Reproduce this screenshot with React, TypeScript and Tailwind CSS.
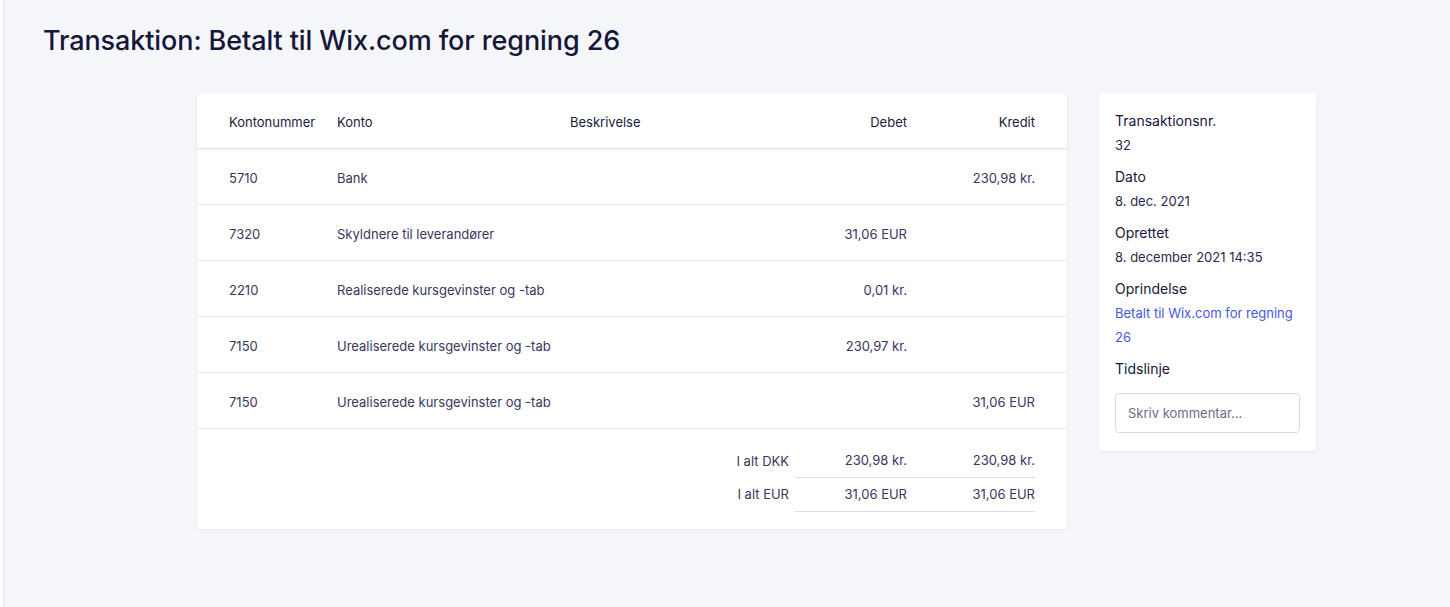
import React from 'react';

const rows = [
  { nr: '5710', konto: 'Bank', debet: '', kredit: '230,98 kr.' },
  { nr: '7320', konto: 'Skyldnere til leverandører', debet: '31,06 EUR', kredit: '' },
  { nr: '2210', konto: 'Realiserede kursgevinster og -tab', debet: '0,01 kr.', kredit: '' },
  { nr: '7150', konto: 'Urealiserede kursgevinster og -tab', debet: '230,97 kr.', kredit: '' },
  { nr: '7150', konto: 'Urealiserede kursgevinster og -tab', debet: '', kredit: '31,06 EUR' },
];

const cols = 'grid grid-cols-[108px_233px_225px_112px_128px] px-8';

export default function App() {
  return (
    <div className="flex min-h-[607px] bg-[#f5f6fa] font-['Inter',sans-serif]">
      <div className="w-[3px] shrink-0 bg-white" />
      <div className="w-px shrink-0 bg-[#e4e5ee]" />
      <div className="flex-1 pt-[25px]">
        <h1 className="pl-[39px] text-[27px] font-medium leading-8 tracking-[-0.1px] text-[#16163a]">
          Transaktion: Betalt til Wix.com for regning 26
        </h1>

        <div className="mt-[36px] flex items-start gap-8 pl-[193px]">
          {/* Posteringer */}
          <div className="w-[870px] rounded bg-white shadow-[0_1px_3px_rgba(30,30,80,0.06)]">
            <div className={`${cols} h-[56px] items-center border-b border-[#dcdde8] pt-1 text-[13px] text-[#1c1b3d] shadow-[0_1px_2px_rgba(30,30,80,0.06)]`}>
              <div>Kontonummer</div>
              <div>Konto</div>
              <div>Beskrivelse</div>
              <div className="text-right">Debet</div>
              <div className="text-right">Kredit</div>
            </div>
            {rows.map((r, i) => (
              <div
                key={i}
                className={`${cols} h-14 items-center border-b border-[#ececf3] pt-1 text-[13px] text-[#3a3660]`}
              >
                <div>{r.nr}</div>
                <div>{r.konto}</div>
                <div />
                <div className="text-right">{r.debet}</div>
                <div className="text-right">{r.kredit}</div>
              </div>
            ))}
            <div className="px-8 pt-4 pb-[17px] text-[13px] text-[#3a3660]">
              <div className="grid grid-cols-[108px_233px_225px_112px_128px]">
                <div className="col-span-3 flex h-[33px] items-center justify-end pr-[6px]">I alt DKK</div>
                <div className="col-span-2 grid h-[33px] grid-cols-[112px_128px] items-center border-b border-[#dcdde6]">
                  <div className="text-right">230,98 kr.</div>
                  <div className="text-right">230,98 kr.</div>
                </div>
                <div className="col-span-3 flex h-[34px] items-center justify-end pr-[6px]">I alt EUR</div>
                <div className="col-span-2 grid h-[34px] grid-cols-[112px_128px] items-center border-b border-[#dcdde6]">
                  <div className="text-right">31,06 EUR</div>
                  <div className="text-right">31,06 EUR</div>
                </div>
              </div>
            </div>
          </div>

          {/* Detaljer */}
          <div className="w-[217px] rounded bg-white px-4 pt-4 pb-[18px] shadow-[0_1px_3px_rgba(30,30,80,0.06)]">
            <div className="text-[14px] leading-6 text-[#16163a]">Transaktionsnr.</div>
            <div className="text-[13px] leading-6 text-[#2a2850]">32</div>
            <div className="mt-2 text-[14px] leading-6 text-[#16163a]">Dato</div>
            <div className="text-[13px] leading-6 text-[#2a2850]">8. dec. 2021</div>
            <div className="mt-2 text-[14px] leading-6 text-[#16163a]">Oprettet</div>
            <div className="text-[13px] leading-6 text-[#2a2850]">8. december 2021 14:35</div>
            <div className="mt-2 text-[14px] leading-6 text-[#16163a]">Oprindelse</div>
            <a href="#" className="block text-[13px] leading-6 text-[#4657e6]">
              Betalt til Wix.com for regning 26
            </a>
            <div className="mt-2 text-[14px] leading-6 text-[#16163a]">Tidslinje</div>
            <input
              type="text"
              placeholder="Skriv kommentar..."
              className="mt-3 h-10 w-full rounded border border-[#d8d9e3] px-3 text-[13px] text-[#2a2850] placeholder:text-[#6b6d85] focus:outline-none"
            />
          </div>
        </div>
      </div>
    </div>
  );
}
